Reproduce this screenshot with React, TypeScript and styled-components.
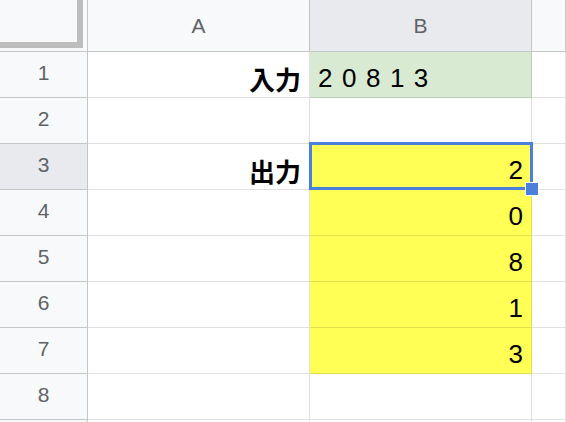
import React from 'react';
import styled, { createGlobalStyle } from 'styled-components';

const GlobalStyle = createGlobalStyle`
  html, body {
    margin: 0;
    padding: 0;
    background: #ffffff;
    overflow: hidden;
  }
`;

const Sheet = styled.div`
  display: grid;
  grid-template-columns: 88px 222px 222px 1fr;
  grid-auto-rows: 46px;
  grid-template-rows: 52px;
  width: 566px;
  height: 422px;
  overflow: hidden;
  font-family: 'Liberation Sans', Arial, 'Noto Sans CJK JP', sans-serif;
`;

const Corner = styled.div`
  background: #f8f9fa;
  border-right: 1px solid #c4c7c5;
  border-bottom: 1px solid #c4c7c5;
  padding: 0 4px 3px 0;
`;

const CornerInner = styled.div`
  height: 100%;
  box-sizing: border-box;
  border-right: 6px solid #bdbdbd;
  border-bottom: 6px solid #bdbdbd;
`;

const ColHeader = styled.div<{ $active?: boolean }>`
  display: flex;
  align-items: center;
  justify-content: center;
  background: ${(p) => (p.$active ? '#e8eaed' : '#f8f9fa')};
  border-right: 1px solid #c4c7c5;
  border-bottom: 1px solid #c4c7c5;
  color: #5f6368;
  font-size: 21px;
`;

const RowHeader = styled.div<{ $active?: boolean }>`
  display: flex;
  align-items: center;
  justify-content: center;
  background: ${(p) => (p.$active ? '#e8eaed' : '#f8f9fa')};
  border-right: 1px solid #c4c7c5;
  border-bottom: 1px solid #c4c7c5;
  color: #5f6368;
  font-size: 21px;
  padding-bottom: 3px;
  box-sizing: border-box;
`;

const Cell = styled.div<{ $bg?: string; $align?: 'left' | 'right'; $selected?: boolean }>`
  position: relative;
  z-index: ${(p) => (p.$selected ? 2 : 'auto')};
  display: flex;
  align-items: flex-end;
  justify-content: ${(p) => (p.$align === 'left' ? 'flex-start' : 'flex-end')};
  background: ${(p) => p.$bg || '#ffffff'};
  border-right: 1px solid rgba(0, 0, 0, 0.12);
  border-bottom: 1px solid rgba(0, 0, 0, 0.12);
  padding: 0 8px 4px 8px;
  box-sizing: border-box;
  color: #000000;
  font-size: 26px;
  line-height: 30px;
`;

const Label = styled.span`
  font-weight: bold;
  font-family: 'Noto Sans CJK JP', sans-serif;
  font-size: 26px;
  line-height: 34px;
  margin-bottom: -3px;
`;

const Spaced = styled.span`
  letter-spacing: 9.5px;
`;

const Selection = styled.div`
  position: absolute;
  top: -2px;
  left: -1px;
  right: -2px;
  bottom: -1px;
  border: 3px solid #4a7fdc;
  pointer-events: none;
`;

const Handle = styled.div`
  position: absolute;
  right: -9px;
  bottom: -9px;
  width: 12px;
  height: 12px;
  background: #4a7fdc;
  border: 1px solid #ffffff;
`;

const YELLOW = '#ffff55';
const GREEN = '#d9ead3';

export default function App() {
  const outputs = ['2', '0', '8', '1', '3'];

  return (
    <>
      <GlobalStyle />
      <Sheet>
        <Corner>
          <CornerInner />
        </Corner>
        <ColHeader>A</ColHeader>
        <ColHeader $active>B</ColHeader>
        <ColHeader />

        <RowHeader>1</RowHeader>
        <Cell>
          <Label>入力</Label>
        </Cell>
        <Cell $bg={GREEN} $align="left">
          <Spaced>20813</Spaced>
        </Cell>
        <Cell />

        <RowHeader>2</RowHeader>
        <Cell />
        <Cell />
        <Cell />

        {outputs.map((d, i) => (
          <React.Fragment key={i}>
            <RowHeader $active={i === 0}>{i + 3}</RowHeader>
            <Cell>{i === 0 && <Label>出力</Label>}</Cell>
            <Cell $bg={YELLOW} $selected={i === 0}>
              {d}
              {i === 0 && (
                <Selection>
                  <Handle />
                </Selection>
              )}
            </Cell>
            <Cell />
          </React.Fragment>
        ))}

        <RowHeader>8</RowHeader>
        <Cell />
        <Cell />
        <Cell />

        <RowHeader />
        <Cell />
        <Cell />
        <Cell />
      </Sheet>
    </>
  );
}
